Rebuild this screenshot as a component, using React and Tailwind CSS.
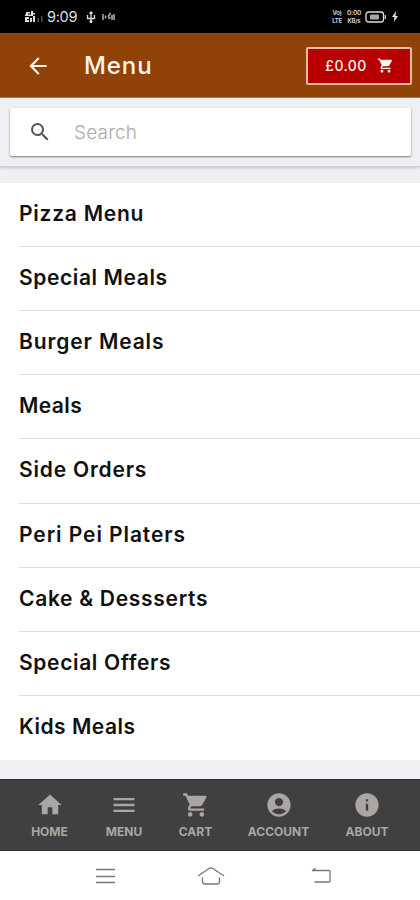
import {
  MdAccountCircle,
  MdArrowBack,
  MdHome,
  MdInfo,
  MdMenu,
  MdSearch,
  MdShoppingCart,
} from 'react-icons/md';

const categories = [
  { name: 'Pizza Menu', tracking: 'tracking-[0.75px]' },
  { name: 'Special Meals', tracking: 'tracking-[0.6px]' },
  { name: 'Burger Meals', tracking: 'tracking-[0.88px]' },
  { name: 'Meals', tracking: 'tracking-[0.4px]' },
  { name: 'Side Orders', tracking: 'tracking-[0.8px]' },
  { name: 'Peri Pei Platers', tracking: 'tracking-[0.92px]' },
  { name: 'Cake & Dessserts', tracking: 'tracking-[0.7px]' },
  { name: 'Special Offers', tracking: 'tracking-[0.65px]' },
  { name: 'Kids Meals', tracking: 'tracking-[0.5px]' },
];

const tabs = [
  { label: 'HOME', icon: MdHome, width: 'w-[39px]' },
  { label: 'MENU', icon: MdMenu, width: 'w-[38px]' },
  { label: 'CART', icon: MdShoppingCart, width: 'w-[33px]' },
  { label: 'ACCOUNT', icon: MdAccountCircle, width: 'w-[61px]' },
  { label: 'ABOUT', icon: MdInfo, width: 'w-[44px]' },
];

function StatusBar() {
  return (
    <div className="flex h-[33px] shrink-0 items-center bg-black pl-[25px] pr-[22px] text-[#dedede]">
      <svg className="h-3 w-[20px]" viewBox="0 0 20 12" fill="currentColor">
        <path d="M1 1h4v1.5H3v1h3V5H0V3.500h1zM6 0h2v2h2v1.500H8V5H6zM0 6h4v2H2v1h2v2H0zM5 7h2v4H5zM8 5h2v6H8z" />
        <path d="M12.500 7h1.500v4h-1.500zM16 5h1.500v6H16z" opacity="0.35" />
      </svg>
      <span className="ml-[2px] mt-[1px] w-[30px] text-[14.5px] leading-none tracking-[-0.3px]">9:09</span>
      <svg className="ml-[9px] h-[12px] w-[10px]" viewBox="0 0 10 12" fill="none" stroke="currentColor" strokeWidth="1.300">
        <path d="M5 1v10M1.500 4v3.500h7V4M3.500 2.500 5 1l1.500 1.500" />
        <circle cx="5" cy="10.500" r="0.900" fill="currentColor" />
      </svg>
      <svg className="ml-[6px] h-[11px] w-[13px]" viewBox="0 0 13 11" fill="none" stroke="currentColor" strokeWidth="1.500">
        <path d="M1 3v6M3.500 4.500v3M6 6l2.500-4M6.500 8l2-2M10 4v5M12 3v6" opacity="0.8" />
      </svg>

      <div className="ml-auto flex items-center">
        <div className="w-[12px] text-center text-[6px] font-semibold leading-[8px] tracking-[-0.3px]">
          <div>Vo)</div>
          <div>LTE</div>
        </div>
        <div className="ml-[3px] w-[16px] text-center text-[6.5px] font-semibold leading-[8px] tracking-[-0.2px]">
          <div>0:00</div>
          <div className="text-[6px]">KB/s</div>
        </div>
        <svg className="ml-[3px] h-3 w-[21px]" viewBox="0 0 21 12" fill="none" stroke="currentColor">
          <rect x="1" y="1" width="17.500" height="10" rx="2.500" strokeWidth="1.300" />
          <path d="M20.300 4v4" strokeWidth="1.200" />
          <rect x="5" y="3.500" width="9" height="5" rx="1" fill="currentColor" stroke="none" opacity="0.75" />
        </svg>
        <svg className="ml-[6px] h-[11px] w-[6px]" viewBox="0 0 6 11" fill="currentColor">
          <path d="M4 0 0 6h2.300L2 11l4-6H3.500z" />
        </svg>
      </div>
    </div>
  );
}

function Header() {
  return (
    <header className="flex h-[65px] shrink-0 items-center border-b border-[#b5744a] bg-[#914206] pl-[25px] pr-2 pt-[1px] text-[#fff3ea]">
      <MdArrowBack className="size-[26px]" />
      <h1 className="ml-[33px] text-[24px] font-medium leading-none tracking-[0.9px]">Menu</h1>
      <button className="ml-auto flex h-[38px] w-[106px] items-center rounded-[2px] border-2 border-[#efb8a8] bg-[#b80002] pl-[17px]">
        <span className="w-[42px] text-[14px] font-medium leading-none tracking-[0.4px]">£0.00</span>
        <MdShoppingCart className="ml-[10px] size-[17px]" />
      </button>
    </header>
  );
}

function SearchBar() {
  return (
    <div className="h-[69px] shrink-0 border-b border-[#cfcfd3] bg-[#efeff4] pl-[10px] pr-[9px] pt-[10px] shadow-[0_1px_3px_rgba(0,0,0,0.18)]">
      <div className="flex h-[48px] items-center rounded-[2px] bg-white pl-[18px] shadow-[0_1px_2px_rgba(0,0,0,0.5)]">
        <MdSearch className="size-[24px] text-[#555]" />
        <span className="ml-[22px] text-[19px] font-light leading-none tracking-[0.2px] text-[#aaa]">Search</span>
      </div>
    </div>
  );
}

function SystemBar() {
  return (
    <div className="flex grow items-center bg-white pl-[95px] text-[#777]">
      <svg className="h-[18px] w-[21px]" viewBox="0 0 21 18" stroke="currentColor" strokeWidth="1.300">
        <path d="M1 2.500h19M1 9.500h19M1 15.500h19" />
      </svg>
      <svg className="ml-[81px] h-5 w-[28px]" viewBox="0 0 28 20" fill="none" stroke="currentColor" strokeWidth="1.300">
        <path d="M1 10 12 2.500q2-1.300 4 0L27 10M5.500 11.500v4q0 2.500 2.500 2.500h12q2.500 0 2.500-2.500v-4" />
      </svg>
      <svg className="ml-[85px] h-[19px] w-[22px]" viewBox="0 0 22 19" fill="none" stroke="currentColor" strokeWidth="1.300">
        <path d="M2 4.500h17q1 0 1 1v9.500q0 1-1 1H4.500" />
        <path d="M5.500 1.500 1.500 4.500h4z" fill="currentColor" stroke="none" />
      </svg>
    </div>
  );
}

export default function App() {
  return (
    <div className="flex h-[900px] w-[420px] flex-col overflow-hidden bg-[#efeff4] font-['Inter',sans-serif]">
      <StatusBar />
      <Header />
      <SearchBar />

      {/* Category list */}
      <ul className="mt-4 flex h-[577px] shrink-0 flex-col bg-white pl-[19px]">
        {categories.map((category) => (
          <li
            key={category.name}
            className="flex flex-1 items-center border-b-[1.5px] border-[#e0e0e0] pb-[2px] last:border-transparent"
          >
            <span className={`whitespace-nowrap text-[21px] font-semibold leading-none text-[#111] ${category.tracking}`}>
              {category.name}
            </span>
          </li>
        ))}
      </ul>

      {/* Bottom tabs */}
      <nav className="mt-[19px] flex h-[72px] shrink-0 gap-9 border-y border-[#303030] bg-[#404040] pl-[30px] pt-[11px] text-[#aaa6a4]">
        {tabs.map(({ label, icon: Icon, width }) => (
          <div key={label} className={`flex flex-col items-center ${width}`}>
            <Icon className="size-[28px]" />
            <span className="mt-[7px] whitespace-nowrap text-[12px] font-bold leading-none">{label}</span>
          </div>
        ))}
      </nav>

      <SystemBar />
    </div>
  );
}
